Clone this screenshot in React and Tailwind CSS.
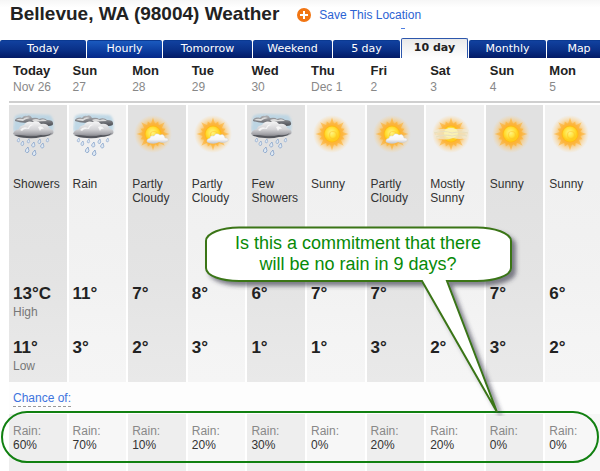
import React from "react";

const tabs = [
  { label: "Today", width: "w-[86px]" },
  { label: "Hourly", width: "w-[75px]", light: true },
  { label: "Tomorrow", width: "w-[89px]" },
  { label: "Weekend", width: "w-[79px]" },
  { label: "5 day", width: "w-[67px]" },
  { label: "10 day", width: "w-[67px]", active: true },
  { label: "Monthly", width: "w-[77px]" },
  { label: "Map", width: "w-[64px]" },
];

const days = [
  { day: "Today", date: "Nov 26", icon: "rain", text: "Showers", high: "13°C", low: "11°", rain: "60%", dark: true },
  { day: "Sun", date: "27", icon: "rain", text: "Rain", high: "11°", low: "3°", rain: "70%" },
  { day: "Mon", date: "28", icon: "partly", text: "Partly Cloudy", high: "7°", low: "2°", rain: "10%", dark: true },
  { day: "Tue", date: "29", icon: "partly", text: "Partly Cloudy", high: "8°", low: "3°", rain: "20%" },
  { day: "Wed", date: "30", icon: "rain", text: "Few Showers", high: "6°", low: "1°", rain: "30%", dark: true },
  { day: "Thu", date: "Dec 1", icon: "sun", text: "Sunny", high: "7°", low: "1°", rain: "0%" },
  { day: "Fri", date: "2", icon: "partly", text: "Partly Cloudy", high: "7°", low: "3°", rain: "20%", dark: true },
  { day: "Sat", date: "3", icon: "mostly", text: "Mostly Sunny", high: "7°", low: "2°", rain: "20%" },
  { day: "Sun", date: "4", icon: "sun", text: "Sunny", high: "7°", low: "3°", rain: "0%", dark: true },
  { day: "Mon", date: "5", icon: "sun", text: "Sunny", high: "6°", low: "2°", rain: "0%" },
];

const rays = Array.from({ length: 32 }, (_, i) => {
  const angle = (i * Math.PI) / 16;
  const radius = i % 2 ? 10.5 : i % 4 ? 13.5 : 16.5;
  return `${(21 + radius * Math.cos(angle)).toFixed(1)},${(21 + radius * Math.sin(angle)).toFixed(1)}`;
}).join(" ");

const drops = [
  [6, 25, 0.7], [10, 28, 0.8], [16, 26, 0.7], [15, 34, 1], [21, 29, 0.9],
  [22, 37, 1], [27, 26, 0.8], [30, 30, 0.9], [35, 25, 0.7],
];

function SharedPaints() {
  return (
    <svg className="absolute size-0" aria-hidden="true">
      <defs>
        <radialGradient id="glow">
          <stop offset="0" stopColor="#ffb11c" stopOpacity="1" />
          <stop offset="0.55" stopColor="#ffb83c" stopOpacity="0.8" />
          <stop offset="0.8" stopColor="#ffc565" stopOpacity="0.35" />
          <stop offset="1" stopColor="#ffcf7c" stopOpacity="0" />
        </radialGradient>
        <radialGradient id="disc" cx="0.45" cy="0.4">
          <stop offset="0" stopColor="#fff68a" />
          <stop offset="0.65" stopColor="#ffe13c" />
          <stop offset="1" stopColor="#ffcc1c" />
        </radialGradient>
        <linearGradient id="puff" x1="0" y1="0" x2="0" y2="1">
          <stop offset="0" stopColor="#ffffff" />
          <stop offset="0.6" stopColor="#f4f4f6" />
          <stop offset="1" stopColor="#c4c6cc" />
        </linearGradient>
        <linearGradient id="storm" x1="0" y1="0" x2="0" y2="1">
          <stop offset="0" stopColor="#f6f6f6" />
          <stop offset="0.5" stopColor="#d2d2d5" />
          <stop offset="0.8" stopColor="#a2a2a7" />
          <stop offset="1" stopColor="#66676d" />
        </linearGradient>
        <linearGradient id="stormBack" x1="0" y1="0" x2="0" y2="1">
          <stop offset="0" stopColor="#b4b5b9" />
          <stop offset="1" stopColor="#4b4d53" />
        </linearGradient>
        <filter id="soften" x="-20%" y="-20%" width="140%" height="140%">
          <feGaussianBlur stdDeviation="1.2" />
        </filter>
        <filter id="edge" x="-10%" y="-10%" width="120%" height="120%">
          <feGaussianBlur stdDeviation="0.6" />
        </filter>
      </defs>
    </svg>
  );
}

function Sun() {
  return (
    <>
      <circle cx="21" cy="21" r="19" fill="url(#glow)" />
      <polygon points={rays} fill="#ffa91a" opacity="0.5" filter="url(#edge)" />
      <circle cx="21" cy="21" r="8.5" fill="#ffb917" />
      <circle cx="21" cy="21" r="7.5" fill="url(#disc)" />
      <circle cx="22" cy="22" r="3.5" fill="none" stroke="#ffc226" strokeWidth="1.2" opacity="0.5" />
    </>
  );
}

function WeatherIcon({ kind, label }) {
  return (
    <svg width="42" height="44" viewBox="0 0 42 44" role="img" aria-label={label} className="block">
      {kind === "rain" ? (
        <>
          <path d="M2 3Q8 0 17 1L37 2Q42 6 40 18L36 22H3L0 16Z" fill="#b5d3e4" opacity="0.8" filter="url(#soften)" />
          <path d="M2 7C3 5 6 4 9 5Q11 2 14 3Q17 1 19 5Q24 4 26 6Q31 4 34 7Q40 7 40 10Q41 13 35 13L18 9Q10 11 2 8Z" fill="url(#stormBack)" />
          <path d="M3 7Q6 5 10 6Q13 3 17 5Q12 6 10 8ZM19 7Q23 5 27 7Q31 5 34 8Q28 8 21 9Z" fill="#dcdcdc" />
          <path d="M0 21Q1 17 6 16Q6 13 11 12Q14 7 20 9Q25 7 28 11Q35 10 36 15Q42 17 40 21Q35 24 29 23Q21 25 14 24Q5 24 0 21Z" fill="url(#storm)" />
          <path d="M7 17Q10 13 15 15Q17 10 21 12Q17 12 16 16Q11 15 9 18ZM25 14Q29 12 31 16Q28 15 27 18Z" fill="#ffffff" opacity="0.75" />
          <path d="M1 22Q8 22 14 23Q21 24 28 22Q34 23 39 20Q35 24 28 24Q21 26 14 25Q6 25 1 22Z" fill="#54565c" />
          {drops.map(([x, y, s], i) => (
            <path key={i} transform={`translate(${x} ${y}) rotate(15) scale(${s})`} d="M0 0Q3 4 1.5 5.2Q0 6.2 -1.4 5Q-2.2 3.4 0 0Z" fill="#e0eaf4" stroke="#7d9cc6" strokeWidth="0.7" />
          ))}
        </>
      ) : (
        <Sun />
      )}
      {kind === "partly" && (
        <path d="M15 29Q14 26 18 25Q18 22 22 23Q24 19 28 22Q32 20 33 25Q37 25 36 28Q32 31 27 29Q21 32 15 29Z" fill="url(#puff)" stroke="#cbccd0" strokeWidth="0.4" />
      )}
      {kind === "mostly" && (
        <g filter="url(#edge)">
          <path d="M3 18Q10 15 17 16Q21 14 25 16Q32 15 39 17L37 20Q39 23 37 25Q30 27 23 25Q15 28 6 25Q3 23 6 21Z" fill="#efe9d6" opacity="0.75" />
          <ellipse cx="21" cy="20" rx="7" ry="5" fill="#fbf4b4" opacity="0.8" />
          <path d="M4 20Q14 17 22 20Q30 18 38 20M6 24Q14 21 22 23Q30 21 37 23" fill="none" stroke="#e8dfbd" strokeWidth="1.2" />
        </g>
      )}
    </svg>
  );
}

function Callout() {
  return (
    <aside className="absolute left-[204px] top-[226px] h-[190px] w-[320px]">
      <svg width="320" height="190" viewBox="0 0 320 190" className="absolute inset-0" aria-hidden="true">
        <defs>
          <filter id="calloutShadow" x="-5%" y="-5%" width="115%" height="115%">
            <feDropShadow dx="4" dy="4" stdDeviation="2" floodColor="#333344" floodOpacity="0.6" />
          </filter>
        </defs>
        <path
          d="M35 1.5H273C290 1.5 307 7 307 15V42C307 50 290 55 273 55H243L293 186L218 55H35C18 55 2 50 2 42V15C2 7 18 1.5 35 1.5Z"
          fill="#fff"
          stroke="#3b7519"
          strokeWidth="2"
          filter="url(#calloutShadow)"
        />
      </svg>
      <p className="relative w-[308px] pt-[7px] text-center text-[18px] leading-[21px] text-[#078a07]">
        Is this a commitment that there
        <br />
        will be no rain in 9 days?
      </p>
    </aside>
  );
}

export default function App() {
  const cell = "border-r-2 border-white pl-1 text-left align-top font-normal ";
  return (
    <main className="relative w-full overflow-hidden bg-white font-['Liberation_Sans',Arial,sans-serif] text-xs text-[#333]">
      <SharedPaints />
      <header className="flex h-[38px] items-start bg-linear-to-b from-[#f6f6f6] to-white to-20% pl-[10px] pt-[2px]">
        <h1 className="text-[19px] leading-6 font-bold text-[#222]">Bellevue, WA (98004) Weather</h1>
        <a href="#save" className="ml-[18px] flex h-6 items-center gap-2 pt-[2px] text-[#2b63d3]">
          <svg width="14" height="14" viewBox="0 0 14 14" aria-hidden="true">
            <circle cx="7" cy="7" r="7" fill="#f17513" />
            <path d="M7 3V11M3 7H11" stroke="#fff" strokeWidth="2" />
          </svg>
          <span>Save This Location</span>
        </a>
        <span className="-ml-5 mt-[26px] h-px w-1 bg-[#4f7fe0]" />
      </header>

      <nav className="-mr-3 flex h-5 items-end gap-px font-['DejaVu_Sans',Verdana,sans-serif] text-[11px]">
        {tabs.map((t) => (
          <a
            key={t.label}
            href="#forecast"
            aria-current={t.active ? "page" : undefined}
            className={
              t.width +
              " flex shrink-0 items-center justify-center rounded-t-[2px] " +
              (t.active
                ? "h-5 border border-b-0 border-[#2d57ac] bg-linear-to-b from-[#e9e9e9] to-white font-bold text-[#222]"
                : t.light
                  ? "h-[18px] border-t border-[#0b3a92] bg-linear-to-b from-[#1b5abf] to-[#06288a] text-white"
                  : "h-[18px] border-t border-[#0b3a92] bg-linear-to-b from-[#11419f] via-[#0a3189] via-50% to-[#031a66] text-white")
            }
          >
            {t.label}
          </a>
        ))}
      </nav>

      <div className="-mr-[5px] pl-[9px]">
        <table className="w-full table-fixed border-separate border-spacing-0">
          <thead>
            <tr className="h-[45px]">
              {days.map((d, i) => (
                <th key={i} scope="col" className="border-b-2 border-[#cfcfcf] pl-1 pt-[5px] text-left align-top font-normal">
                  <span className="block text-[13px] leading-4 font-bold text-[#222]">{d.day}</span>
                  <span className="block leading-4 text-[#888]">{d.date}</span>
                </th>
              ))}
            </tr>
          </thead>
          <tbody>
            <tr className="h-[74px]">
              {days.map((d, i) => (
                <td key={i} className={cell + "border-t-2 pt-2 " + (d.dark ? "bg-[#e1e1e1]" : "bg-[#f0f0f0]")}>
                  <WeatherIcon kind={d.icon} label={d.text} />
                </td>
              ))}
            </tr>
            <tr className="h-[107px]">
              {days.map((d, i) => (
                <td key={i} className={cell + "leading-[14px] " + (d.dark ? "bg-linear-to-b from-[#e1e1e1] to-[#e4e4e4]" : "bg-linear-to-b from-[#f0f0f0] to-[#f2f2f2]")}>
                  {d.text}
                </td>
              ))}
            </tr>
            <tr className="h-[54px]">
              {days.map((d, i) => (
                <td key={i} className={cell + (d.dark ? "bg-linear-to-b from-[#e4e4e4] to-[#e7e7e7]" : "bg-linear-to-b from-[#f2f2f2] to-[#f4f4f4]")}>
                  <span className="block text-[17px] leading-5 font-bold text-[#222]">{d.high}</span>
                  {i === 0 && <span className="block leading-4 text-[#777]">High</span>}
                </td>
              ))}
            </tr>
            <tr className="h-11">
              {days.map((d, i) => (
                <td key={i} className={cell + (d.dark ? "bg-linear-to-b from-[#e7e7e7] to-[#e9e9e9]" : "bg-linear-to-b from-[#f4f4f4] to-[#f5f5f5]")}>
                  <span className="block text-[17px] leading-5 font-bold text-[#222]">{d.low}</span>
                  {i === 0 && <span className="block leading-4 text-[#777]">Low</span>}
                </td>
              ))}
            </tr>
            <tr className="h-8">
              <th colSpan={10} scope="rowgroup" className="bg-[#fdfdfd] pl-1 pt-2 text-left align-top font-normal">
                <a href="#chance" className="inline-block border-b border-dashed border-[#999] leading-[15px] text-[#3d74dd]">
                  Chance of:
                </a>
              </th>
            </tr>
            <tr className="h-[57px]">
              {days.map((d, i) => (
                <td key={i} className={cell + "pt-[10px] leading-[14px] " + (d.dark ? "bg-[#eeeeee]" : "bg-[#f7f7f7]")}>
                  <span className="block text-[#888]">Rain:</span>
                  <span className="block">{d.rain}</span>
                </td>
              ))}
            </tr>
          </tbody>
        </table>
      </div>

      <div className="absolute inset-x-px top-[411px] h-[52px] rounded-full border-2 border-[#118011]" />
      <Callout />
    </main>
  );
}
